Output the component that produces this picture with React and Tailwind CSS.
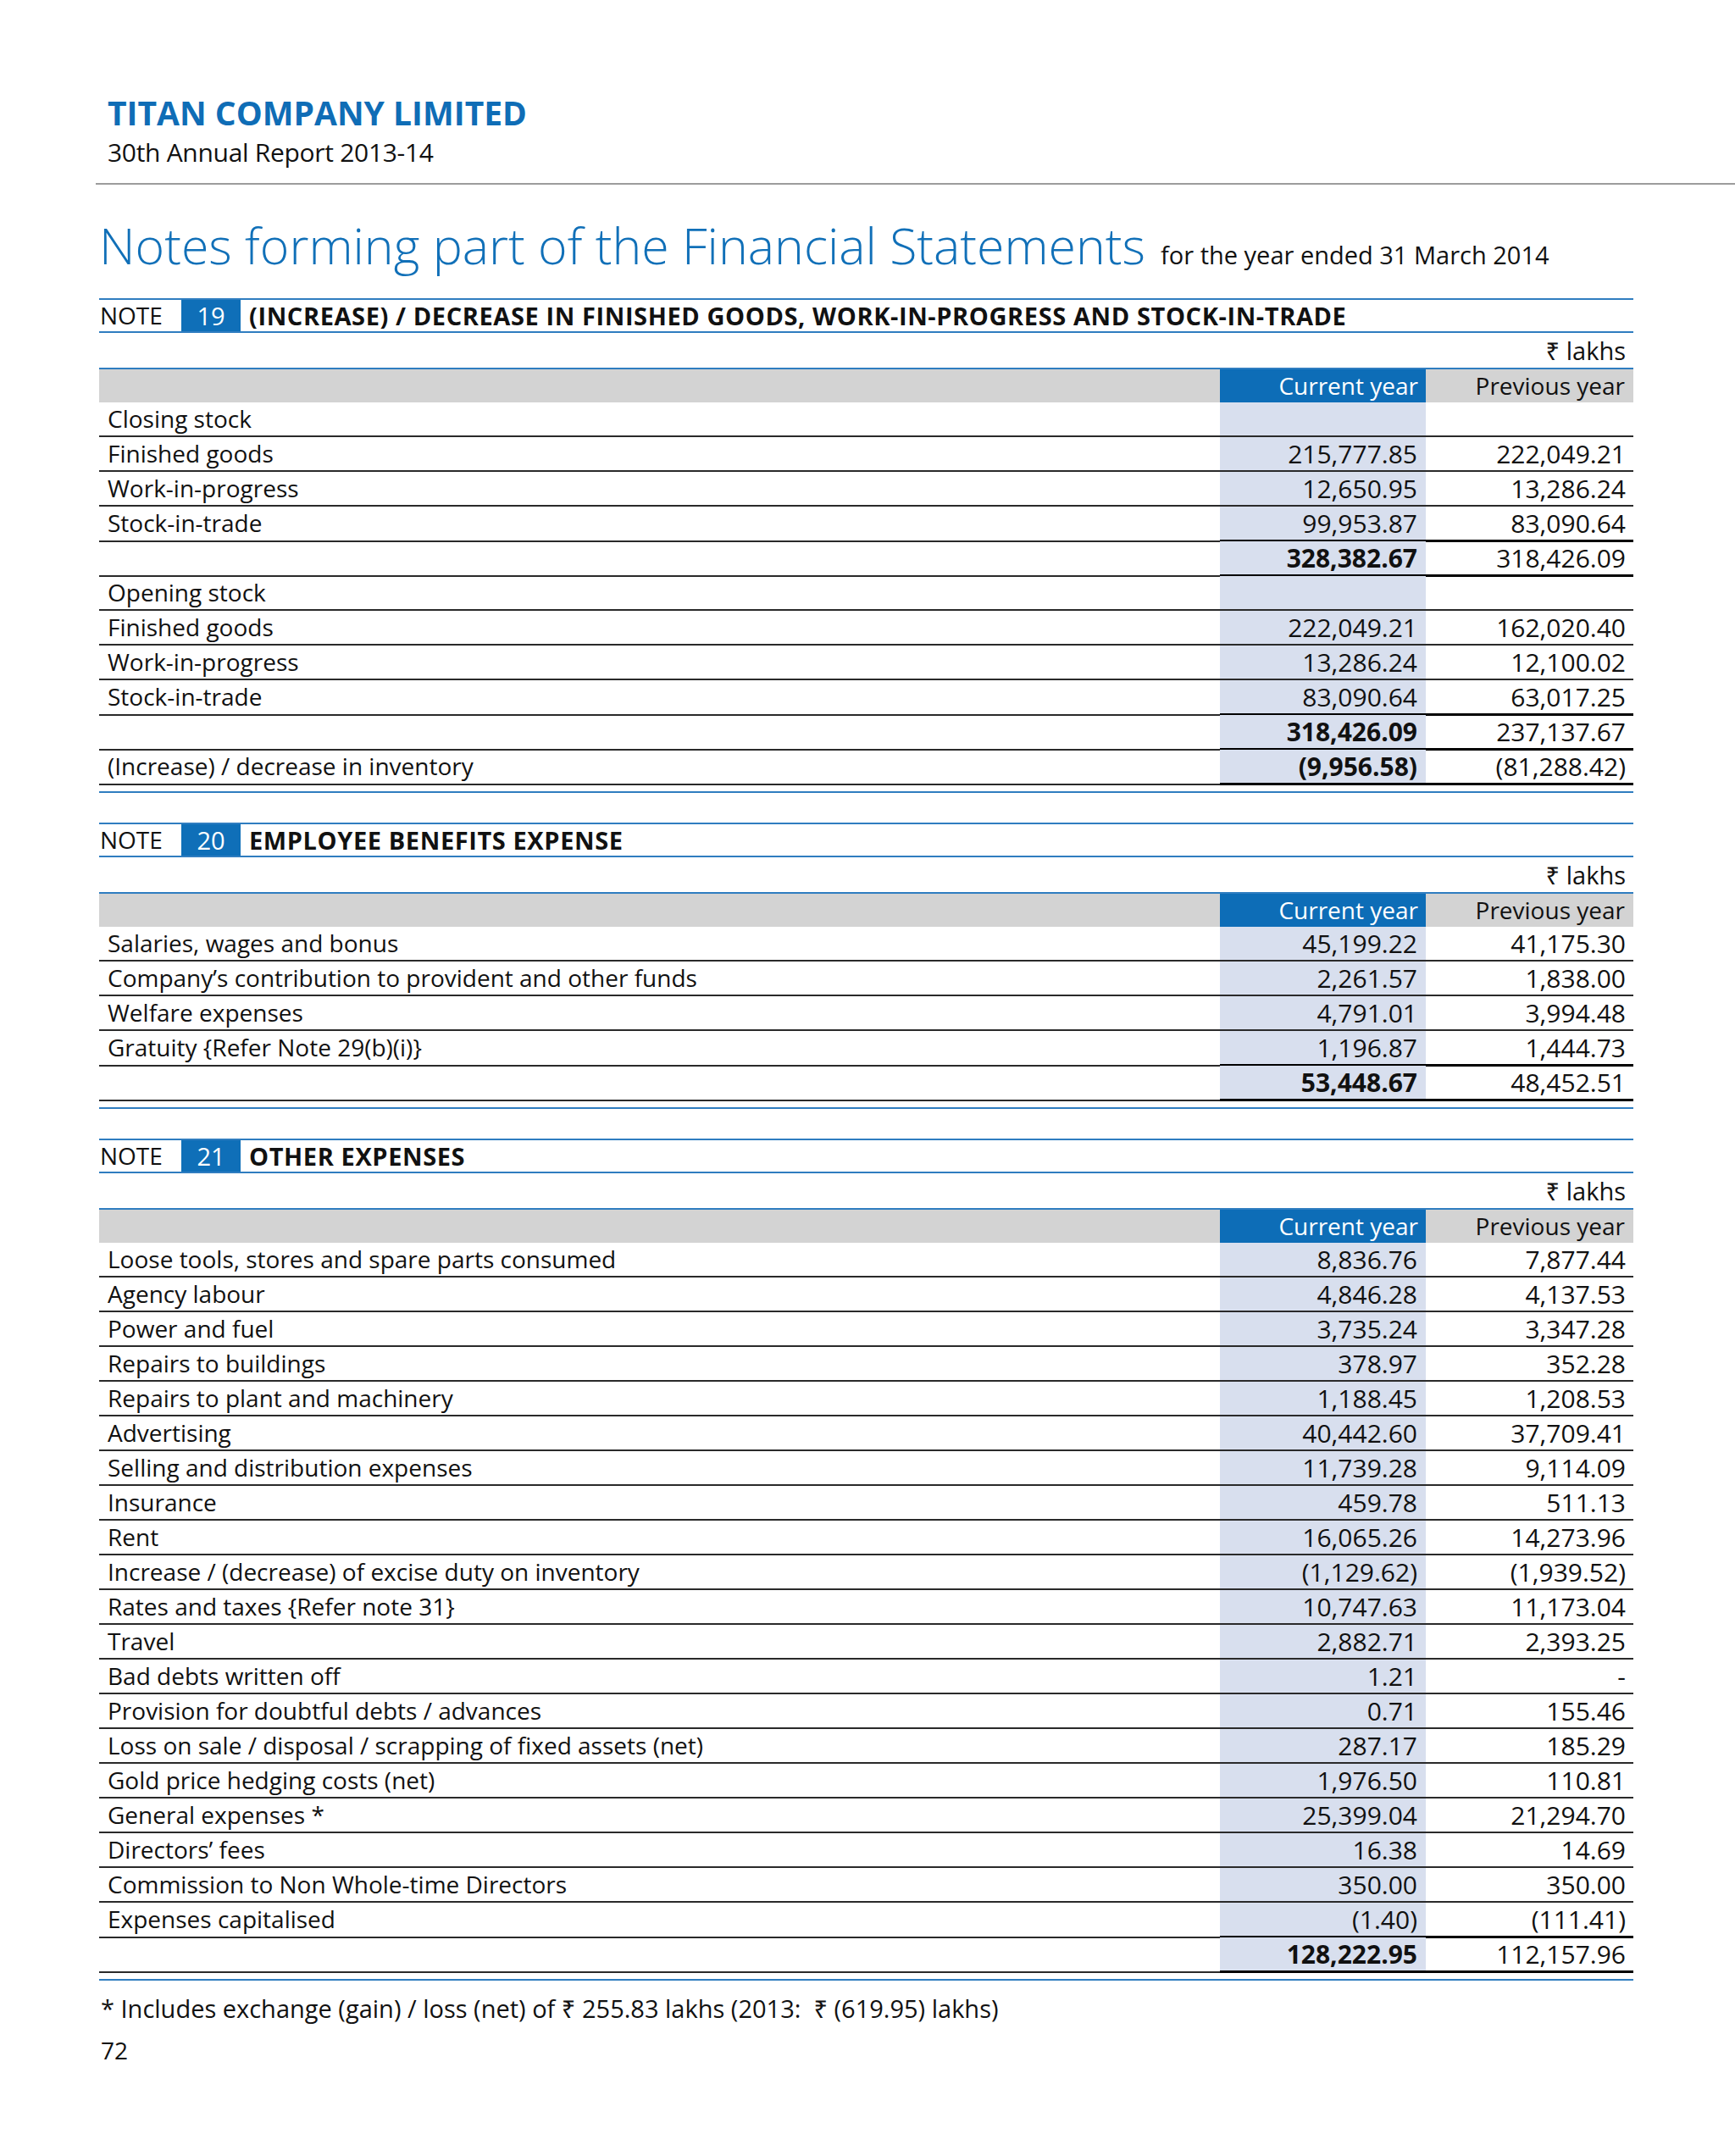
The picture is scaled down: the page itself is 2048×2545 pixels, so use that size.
import React from "react";

const notes = [
  {
    no: "19",
    title: "(INCREASE) / DECREASE IN FINISHED GOODS, WORK-IN-PROGRESS AND STOCK-IN-TRADE",
    rows: [
      { label: "Closing stock" },
      { label: "Finished goods", cur: "215,777.85", prev: "222,049.21" },
      { label: "Work-in-progress", cur: "12,650.95", prev: "13,286.24" },
      { label: "Stock-in-trade", cur: "99,953.87", prev: "83,090.64" },
      { label: "", cur: "328,382.67", prev: "318,426.09", total: true },
      { label: "Opening stock" },
      { label: "Finished goods", cur: "222,049.21", prev: "162,020.40" },
      { label: "Work-in-progress", cur: "13,286.24", prev: "12,100.02" },
      { label: "Stock-in-trade", cur: "83,090.64", prev: "63,017.25" },
      { label: "", cur: "318,426.09", prev: "237,137.67", total: true },
      { label: "(Increase) / decrease in inventory", cur: "(9,956.58)", prev: "(81,288.42)", total: true },
    ],
  },
  {
    no: "20",
    title: "EMPLOYEE BENEFITS EXPENSE",
    rows: [
      { label: "Salaries, wages and bonus", cur: "45,199.22", prev: "41,175.30" },
      { label: "Company’s contribution to provident and other funds", cur: "2,261.57", prev: "1,838.00" },
      { label: "Welfare expenses", cur: "4,791.01", prev: "3,994.48" },
      { label: "Gratuity {Refer Note 29(b)(i)}", cur: "1,196.87", prev: "1,444.73" },
      { label: "", cur: "53,448.67", prev: "48,452.51", total: true },
    ],
  },
  {
    no: "21",
    title: "OTHER EXPENSES",
    rows: [
      { label: "Loose tools, stores and spare parts consumed", cur: "8,836.76", prev: "7,877.44" },
      { label: "Agency labour", cur: "4,846.28", prev: "4,137.53" },
      { label: "Power and fuel", cur: "3,735.24", prev: "3,347.28" },
      { label: "Repairs to buildings", cur: "378.97", prev: "352.28" },
      { label: "Repairs to plant and machinery", cur: "1,188.45", prev: "1,208.53" },
      { label: "Advertising", cur: "40,442.60", prev: "37,709.41" },
      { label: "Selling and distribution expenses", cur: "11,739.28", prev: "9,114.09" },
      { label: "Insurance", cur: "459.78", prev: "511.13" },
      { label: "Rent", cur: "16,065.26", prev: "14,273.96" },
      { label: "Increase / (decrease) of excise duty on inventory", cur: "(1,129.62)", prev: "(1,939.52)" },
      { label: "Rates and taxes {Refer note 31}", cur: "10,747.63", prev: "11,173.04" },
      { label: "Travel", cur: "2,882.71", prev: "2,393.25" },
      { label: "Bad debts written off", cur: "1.21", prev: "-" },
      { label: "Provision for doubtful debts / advances", cur: "0.71", prev: "155.46" },
      { label: "Loss on sale / disposal / scrapping of fixed assets (net)", cur: "287.17", prev: "185.29" },
      { label: "Gold price hedging costs (net)", cur: "1,976.50", prev: "110.81" },
      { label: "General expenses *", cur: "25,399.04", prev: "21,294.70" },
      { label: "Directors’ fees", cur: "16.38", prev: "14.69" },
      { label: "Commission to Non Whole-time Directors", cur: "350.00", prev: "350.00" },
      { label: "Expenses capitalised", cur: "(1.40)", prev: "(111.41)" },
      { label: "", cur: "128,222.95", prev: "112,157.96", total: true },
    ],
  },
];

function Note({ note, first }) {
  return (
    <div className={first ? "mt-[34px]" : "mt-[35px]"}>
      {/* note heading bar */}
      <div className="flex h-[41px] border-y-2 border-[#2f7dc0] text-[28px] leading-[37px]">
        <div className="w-[97px] pl-[1px]">NOTE</div>
        <div className="w-[70px] bg-[#0f6fb8] text-center text-[29px] text-white">{note.no}</div>
        <div className="pl-[10px] text-[29px] font-bold tracking-[0.6px]">{note.title}</div>
      </div>

      <div className="h-[41px] pr-[9px] text-right text-[29px] leading-[41px]">₹ lakhs</div>

      <div className="grid h-[41px] grid-cols-[1fr_243px_245px] border-t-2 border-[#2f7dc0] text-[28px] leading-[39px]">
        <div className="bg-[#d3d3d3]" />
        <div className="bg-[#0d6db7] pr-[9px] text-right text-white">Current year</div>
        <div className="bg-[#d3d3d3] pr-[10px] text-right">Previous year</div>
      </div>

      {note.rows.map((r, i) => {
        const next = note.rows[i + 1];
        const thick = r.total || (next && next.total);
        const numBorder = thick ? "border-b-[3px] border-black" : "border-b-2 border-[#2a2a2a]";
        return (
          <div key={i} className="grid h-[41px] grid-cols-[1fr_243px_245px] leading-[39px]">
            <div className="border-b-2 border-[#2a2a2a] pl-[10px] text-[28px]">{r.label}</div>
            <div className={`bg-[#d8dfee] pr-[10px] text-right text-[30px] ${numBorder} ${r.total ? "font-bold" : ""}`}>
              {r.cur}
            </div>
            <div className={`pr-[9px] text-right text-[30px] ${numBorder}`}>{r.prev}</div>
          </div>
        );
      })}

      <div className="mt-[8px] h-[2px] bg-[#2f7dc0]" />
    </div>
  );
}

export default function App() {
  return (
    <div className="min-h-[2545px] w-[2048px] bg-white pt-[111px] font-['Open_Sans','Noto_Sans','DejaVu_Sans',sans-serif] text-[#111]">
      <div className="pl-[127px]">
        <div className="text-[39px] font-bold leading-[44px] text-[#0f6db6]">TITAN COMPANY LIMITED</div>
        <div className="mt-[8px] text-[30px] leading-[34px] tracking-[-0.3px]">30th Annual Report 2013-14</div>
      </div>
      <div className="ml-[113px] mt-[19px] h-[2px] bg-[#9c9c9c]" />

      <div className="ml-[117px] w-[1811px]">
        <div className="mt-[42px] flex items-baseline gap-[18px]">
          <h1 className="text-[59px] font-light leading-[58px] text-[#1170b8]">
            Notes forming part of the Financial Statements
          </h1>
          <span className="text-[29px] leading-[29px]">for the year ended 31 March 2014</span>
        </div>

        {notes.map((n, i) => (
          <Note key={n.no} note={n} first={i === 0} />
        ))}

        <p className="mt-[19px] whitespace-pre pl-[2px] text-[29px] leading-[28px]">
          {"* Includes exchange (gain) / loss (net) of ₹ 255.83 lakhs (2013:  ₹ (619.95) lakhs)"}
        </p>
        <p className="mt-[22px] pl-[2px] text-[28px] leading-[26px]">72</p>
      </div>
    </div>
  );
}
